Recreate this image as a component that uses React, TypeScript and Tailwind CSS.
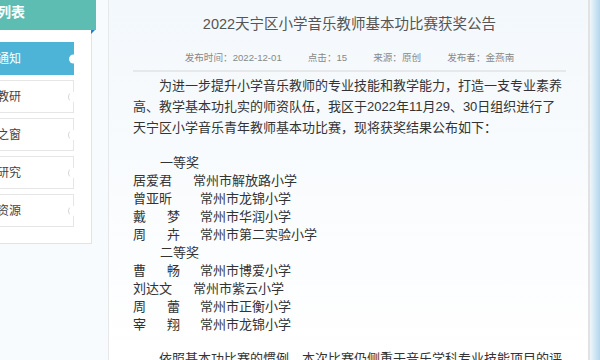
import React from "react";

const menu = [
  { label: "最新通知", active: true },
  { label: "网络教研", active: false },
  { label: "名师之窗", active: false },
  { label: "课题研究", active: false },
  { label: "教学资源", active: false },
];

const firstPrize = [
  { name: "居爱君", school: "常州市解放路小学", wide: false },
  { name: "曾亚昕", school: "常州市龙锦小学", wide: true },
  { name: "戴梦", school: "常州市华润小学", wide: true },
  { name: "周卉", school: "常州市第二实验小学", wide: true },
];

const secondPrize = [
  { name: "曹畅", school: "常州市博爱小学", wide: true },
  { name: "刘达文", school: "常州市紫云小学", wide: false },
  { name: "周蕾", school: "常州市正衡小学", wide: true },
  { name: "宰翔", school: "常州市龙锦小学", wide: true },
];

type Row = { name: string; school: string; wide: boolean };

const WinnerRow = ({ row }: { row: Row }) => (
  <div className="flex">
    <span className={row.wide ? "w-[67px] shrink-0" : "w-[60px] shrink-0"}>
      {row.name.length === 2 ? (
        <span className="flex w-[47px] justify-between">
          <span>{row.name[0]}</span>
          <span>{row.name[1]}</span>
        </span>
      ) : (
        row.name
      )}
    </span>
    <span>{row.school}</span>
  </div>
);

const App = () => {
  return (
    <div className="w-[600px] h-[360px] overflow-hidden flex bg-white font-['Liberation_Sans','Noto_Sans_CJK_SC',sans-serif]">
      {/* Sidebar */}
      <aside className="w-[108px] shrink-0 overflow-hidden bg-[#f8fbfd]">
        <div className="-ml-[40px] w-[136px]">
          <div className="h-[30px] bg-[#5dbdb2] flex items-center pl-[9px] pb-[5px]">
            <span className="text-[14px] font-bold text-white tracking-[0px]">通知列表</span>
          </div>
          <div className="relative w-[132px] bg-white border-r border-b border-[#e3e3e3] pt-[12px] pb-[16px] flex flex-col gap-[5px]">
            <span className="absolute right-[-4px] top-0 w-0 h-0 border-t-[4px] border-t-[#2b7dc4] border-r-[4px] border-r-transparent" />
            {menu.map((m) => (
              <div
                key={m.label}
                className={
                  m.active
                    ? "relative w-[114px] h-[33px] bg-[#4db4d8] flex items-center pl-[13px] text-[12px] text-white"
                    : "relative w-[114px] h-[33px] bg-white border border-[#e6e6e6] flex items-center pl-[12px] text-[12px] text-[#444]"
                }
              >
                {m.label}
                {m.active ? (
                  <span className="absolute right-[-4px] top-1/2 -translate-y-1/2 w-[9px] h-[9px] rounded-full bg-white" />
                ) : (
                  <span className="absolute right-[-5px] top-1/2 -translate-y-1/2 w-[10px] h-[10px] rounded-full bg-white border border-l-[#d6d6d6] border-t-transparent border-b-transparent border-r-transparent" />
                )}
              </div>
            ))}
          </div>
        </div>
      </aside>

      {/* Article */}
      <main className="w-[482px] shrink-0 h-full border-l border-r-2 border-l-[#e8e8e8] border-r-[#e2e2e2] bg-linear-to-b from-[#f3f8fc] to-white pt-[14px] pl-[24px] pr-[22px] text-[#333]">
        <h1 className="text-[14.5px] leading-[20px] text-center text-[#555]">
          2022天宁区小学音乐教师基本功比赛获奖公告
        </h1>
        <div className="mt-[17px] flex justify-center gap-[26px] text-[9.6px] leading-[14px] text-[#888]">
          <span>发布时间：2022-12-01</span>
          <span>点击：15</span>
          <span>来源：原创</span>
          <span>发布者：金燕南</span>
        </div>
        <div className="mt-[5px] h-[2px] bg-[#e6e8ea]" />

        <p className="mt-[2.5px] text-[13px] leading-[21px] indent-[2em]">
          为进一步提升小学音乐教师的专业技能和教学能力，打造一支专业素养高、教学基本功扎实的师资队伍，我区于2022年11月29、30日组织进行了天宁区小学音乐青年教师基本功比赛，现将获奖结果公布如下：
        </p>

        <div className="mt-[16.5px] text-[13px] leading-[18px]">
          <div className="pl-[27px]">一等奖</div>
          {firstPrize.map((r) => (
            <WinnerRow key={r.name} row={r} />
          ))}
          <div className="pl-[27px]">二等奖</div>
          {secondPrize.map((r) => (
            <WinnerRow key={r.name} row={r} />
          ))}
        </div>

        <p className="mt-[14px] text-[13px] leading-[21px] indent-[2em]">
          依照基本功比赛的惯例，本次比赛仍侧重于音乐学科专业技能项目的评比，同时兼顾教学设计与课堂展示。
        </p>
      </main>

      <div className="flex-1 bg-linear-to-r from-[#eef6fb] to-[#b3d6eb]" />
    </div>
  );
};

export default App;
